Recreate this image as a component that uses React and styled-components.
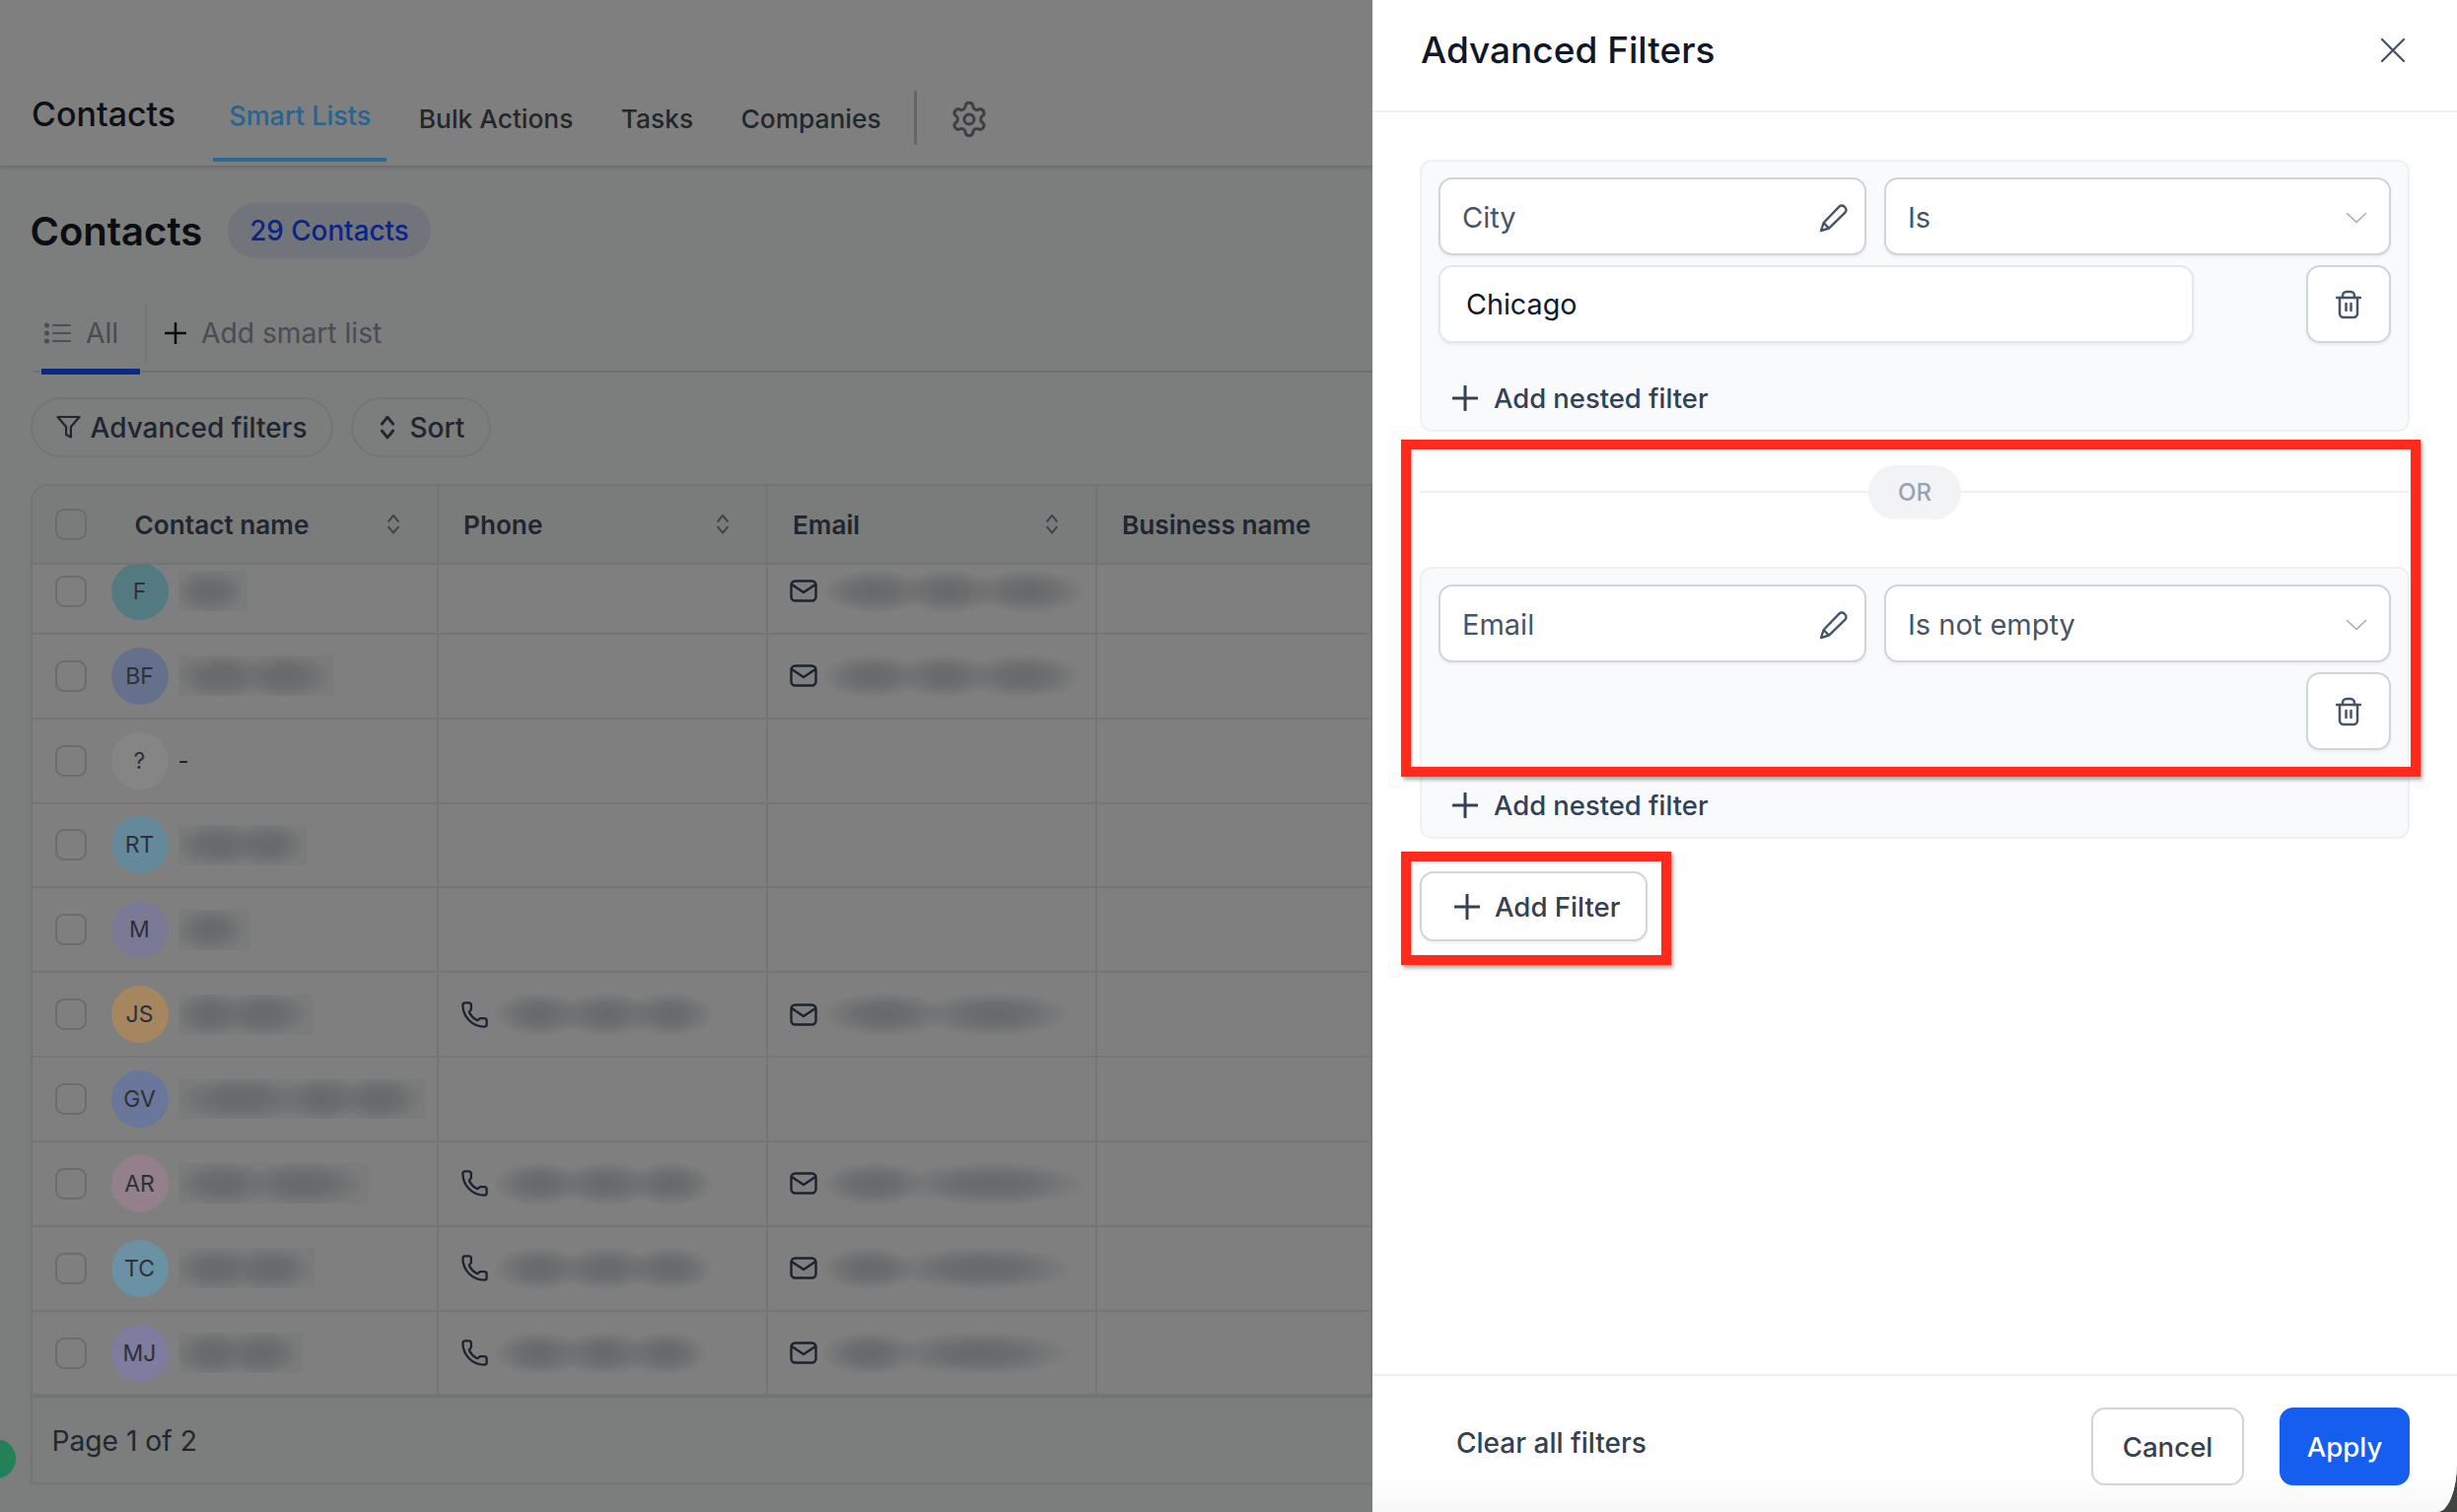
import React from "react";
import styled, { createGlobalStyle } from "styled-components";
import { Phone, Settings } from "lucide-react";

const GlobalStyle = createGlobalStyle`
  html, body { margin: 0; padding: 0; }
  body { font-family: Inter, "Liberation Sans", sans-serif; }
  * { box-sizing: border-box; }
`;

const rows = [
  { initials: "F", color: "#537a80", name: [44], email: [80, 70, 90] },
  { initials: "BF", color: "#65708c", name: [66, 66], email: [76, 70, 90] },
  { initials: "?", color: "#858585", empty: true },
  { initials: "RT", color: "#64899b", name: [60, 44] },
  { initials: "M", color: "#7b7a96", name: [46] },
  { initials: "JS", color: "#a6865f", name: [44, 66], phone: [66, 70, 60], email: [100, 125] },
  { initials: "GV", color: "#69779a", name: [108, 56, 60] },
  { initials: "AR", color: "#94808b", name: [70, 96], phone: [66, 70, 60], email: [80, 160] },
  { initials: "TC", color: "#6a92a4", name: [56, 56], phone: [66, 70, 60], email: [70, 160] },
  { initials: "MJ", color: "#7e7c9f", name: [50, 50], phone: [66, 66, 58], email: [70, 155] },
];

const Page = styled.div`
  display: flex;
  width: 2492px;
  height: 1534px;
  overflow: hidden;
  background: #3f4441;
`;

const Backdrop = styled.div`
  position: relative;
  width: 1392px;
  flex: none;
  background: #7c7d7d;
`;

const NavBar = styled.nav`
  display: flex;
  align-items: flex-end;
  height: 168px;
  padding: 0 0 4px 32px;
  background: #7f7f7f;
  box-shadow: 0 2px 4px rgba(0, 0, 0, 0.16);
`;

const NavTitle = styled.div`
  height: 90px;
  padding-top: 21px;
  margin-right: 38px;
  font-size: 34px;
  font-weight: 500;
  line-height: 42px;
  color: #0d1015;
`;

const NavTab = styled.div`
  height: 90px;
  padding: ${(p) => (p.$active ? "24px 16px 0" : "27px 0 0")};
  margin-right: ${(p) => (p.$active ? "32.5px" : "48.5px")};
  font-size: ${(p) => (p.$active ? 27 : 26.3)}px;
  font-weight: 500;
  line-height: 40px;
  color: ${(p) => (p.$active ? "#27648f" : "#22272e")};
  border-bottom: ${(p) => (p.$active ? "4px solid #2b6a94" : "0")};
`;

const NavDivider = styled.div`
  align-self: flex-start;
  width: 3px;
  height: 55px;
  margin: 92px 0 0 -15px;
  background: #666;
`;

const GearIcon = styled(Settings)`
  align-self: flex-start;
  margin: 101px 0 0 33px;
  color: #3d3f42;
`;

const Content = styled.main`
  padding-left: 30.5px;
`;

const TitleRow = styled.div`
  display: flex;
  align-items: center;
  gap: 26px;
  height: 56px;
  margin-top: 38px;
`;

const PageTitle = styled.h1`
  margin: 0;
  font-size: 40px;
  font-weight: 600;
  color: #0a0d12;
`;

const CountBadge = styled.span`
  display: flex;
  align-items: center;
  height: 56px;
  padding: 0 22px;
  border-radius: 28px;
  background: #72747c;
  font-size: 27.8px;
  font-weight: 500;
  color: #0b2585;
`;

const ListTabs = styled.div`
  display: flex;
  height: 70px;
  margin: 46px 0 0 3.5px;
  border-bottom: 2px solid #6f7171;
`;

const ListTab = styled.div`
  position: relative;
  display: flex;
  align-items: center;
  gap: 15px;
  width: 108px;
  height: 70px;
  padding: 0 0 10px 11px;
  font-size: 28.2px;
  color: #474c55;
  &::after {
    content: "";
    position: absolute;
    left: 8px;
    right: 0;
    bottom: -2px;
    height: 6px;
    background: #0e2a80;
  }
`;

const AddList = styled.div`
  display: flex;
  align-items: center;
  gap: 15px;
  height: 60px;
  margin-left: 5px;
  padding: 0 0 0 18px;
  border-left: 2px solid #737676;
  font-size: 28.2px;
  color: #474c55;
`;

const FilterRow = styled.div`
  display: flex;
  gap: 18px;
  margin-top: 25px;
`;

const PillButton = styled.div`
  display: flex;
  align-items: center;
  gap: ${(p) => (p.$sort ? 16 : 10)}px;
  height: 61px;
  padding: ${(p) => (p.$sort ? "0 25px 0 28px" : "0 24px")};
  border: 2px solid #747676;
  border-radius: 31px;
  font-size: 28px;
  font-weight: 500;
  color: #20262f;
`;

const Table = styled.section`
  margin: 27px 0 0 0;
  border-left: 2px solid #737575;
  border-top: 2px solid #737575;
  border-top-left-radius: 18px;
  height: 1015px;
  border-bottom: 2px solid #737575;
`;

const HeaderRow = styled.div`
  display: grid;
  grid-template-columns: 412.5px 334px 334px 1fr;
  height: 80px;
  background: #797c7b;
  border-bottom: 2px solid #727474;
  border-top-left-radius: 16px;
`;

const HeaderCell = styled.div`
  display: flex;
  align-items: center;
  justify-content: space-between;
  padding: ${(p) => (p.$first ? "0 38px 0 104px" : "0 38px 0 25px")};
  border-right: 2px solid #737575;
  font-size: 26.2px;
  font-weight: 600;
  color: #20262f;
`;

const Rows = styled.div`
  height: 843px;
  overflow: hidden;
  background: #7f7f7f;
`;

const RowsInner = styled.div`
  margin-top: -15px;
`;

const Row = styled.div`
  display: grid;
  grid-template-columns: 412.5px 334px 334px 1fr;
  height: 85.85px;
  border-bottom: 2px solid #747575;
`;

const Cell = styled.div`
  display: flex;
  align-items: center;
  padding-left: ${(p) => p.$pad || 22}px;
  border-right: 2px solid #747575;
  color: #1c222b;
`;

const CheckBox = styled.div`
  flex: none;
  width: 32px;
  height: 32px;
  border: 2px solid #6a6c6f;
  border-radius: 9px;
`;

const HeaderCheck = styled(CheckBox)`
  position: absolute;
  margin-left: -80.5px;
`;

const Avatar = styled.div`
  flex: none;
  display: flex;
  align-items: center;
  justify-content: center;
  width: 58px;
  height: 58px;
  margin: 0 10px 0 24.5px;
  border-radius: 50%;
  background: ${(p) => p.$color};
  font-size: 23px;
  color: #2c3138;
`;

const Dash = styled.span`
  font-size: 24px;
  color: #1c222b;
`;

const BlurBox = styled.div`
  display: flex;
  align-items: center;
  height: ${(p) => (p.$boxed ? 41 : 46)}px;
  padding: ${(p) => (p.$boxed ? "0 16px 0 10px" : "0 14px")};
  background: ${(p) => (p.$boxed ? "#7a7b7b" : "transparent")};
  overflow: ${(p) => (p.$boxed ? "hidden" : "visible")};
`;

const BlurBit = styled.span`
  display: block;
  flex: none;
  height: 46px;
  margin: 0 -14px;
  background: radial-gradient(
    ellipse closest-side,
    #66686b 0%,
    rgba(102, 104, 107, 0.75) 45%,
    rgba(102, 104, 107, 0) 100%
  );
`;

const RowIcon = styled.span`
  flex: none;
  display: flex;
  margin-right: 4px;
  color: #1b2230;
`;

const Pagination = styled.div`
  display: flex;
  align-items: center;
  height: 88px;
  padding: 2px 0 0 20px;
  border-top: 2px solid #727474;
  font-size: 28.2px;
  color: #22272e;
`;

const HelpDot = styled.div`
  position: absolute;
  left: -24px;
  top: 1460px;
  width: 40px;
  height: 40px;
  border-radius: 50%;
  background: #238057;
`;

const Panel = styled.aside`
  position: relative;
  display: flex;
  flex-direction: column;
  width: 1100px;
  flex: none;
  background: #fff;
  border-bottom-right-radius: 20px 50px;
`;

const PanelHeader = styled.header`
  display: flex;
  align-items: center;
  justify-content: space-between;
  height: 114px;
  padding: 0 52px 11px 49px;
  border-bottom: 2px solid #eef0f4;
`;

const PanelTitle = styled.h2`
  margin: 0;
  font-size: 37px;
  font-weight: 500;
  color: #101828;
`;

const PanelBody = styled.div`
  flex: 1;
  padding: 48px 48px 0;
`;

const GroupCard = styled.div`
  height: 276px;
  padding: 16px 17px 0;
  border: 2px solid #eef0f4;
  border-radius: 12px;
  background: #f9fafb;
`;

const FieldRow = styled.div`
  display: flex;
  justify-content: space-between;
  gap: 18px;
  height: 79px;
  margin-bottom: 10px;
`;

const Field = styled.div`
  display: flex;
  align-items: center;
  justify-content: space-between;
  width: ${(p) => p.$width || "auto"};
  flex: ${(p) => (p.$width ? "none" : 1)};
  height: 79px;
  padding: ${(p) => (p.$value ? "0 26px" : "2px 16px 0 22px")};
  border: 2px solid ${(p) => (p.$value ? "#e4e7ec" : "#d0d5dd")};
  border-radius: 14px;
  background: #fff;
  box-shadow: 0 2px 3px rgba(16, 24, 40, 0.06);
  font-size: ${(p) => (p.$value ? 28.7 : 29)}px;
  color: ${(p) => (p.$value ? "#101828" : "#475467")};
`;

const IconButton = styled.div`
  display: flex;
  align-items: center;
  justify-content: center;
  width: 86px;
  height: 79px;
  margin-left: auto;
  border: 2px solid #d0d5dd;
  border-radius: 14px;
  background: #fff;
  box-shadow: 0 2px 3px rgba(16, 24, 40, 0.06);
`;

const NestedLink = styled.div`
  display: flex;
  align-items: center;
  gap: 16px;
  margin: 39px 0 0 14px;
  font-size: 27.4px;
  font-weight: 500;
  color: #344054;
`;

const OrDivider = styled.div`
  position: relative;
  display: flex;
  align-items: center;
  justify-content: center;
  height: 122px;
  margin-bottom: 15px;
  &::before {
    content: "";
    position: absolute;
    left: 0;
    right: 0;
    top: 60px;
    height: 2px;
    background: #eef0f4;
  }
`;

const OrPill = styled.span`
  position: relative;
  display: flex;
  align-items: center;
  justify-content: center;
  width: 94px;
  height: 55px;
  border-radius: 28px;
  background: #f2f3f5;
  font-size: 24px;
  font-weight: 500;
  color: #98a2b3;
`;

const AddFilter = styled.div`
  display: flex;
  align-items: center;
  gap: 15px;
  width: 231px;
  height: 71px;
  margin-top: 33px;
  padding-left: 33px;
  border: 2px solid #d0d5dd;
  border-radius: 14px;
  background: #fff;
  box-shadow: 0 2px 3px rgba(16, 24, 40, 0.06);
  font-size: 27.6px;
  font-weight: 500;
  color: #344054;
`;

const Highlight = styled.div`
  position: absolute;
  left: ${(p) => p.$left}px;
  top: ${(p) => p.$top}px;
  width: ${(p) => p.$width}px;
  height: ${(p) => p.$height}px;
  border: 10px solid #ff2a1b;
  box-shadow: 2px 3px 4px rgba(0, 0, 0, 0.35), inset 1px 1px 3px rgba(0, 0, 0, 0.25);
  pointer-events: none;
`;

const PanelFooter = styled.footer`
  display: flex;
  align-items: flex-start;
  justify-content: space-between;
  height: 140px;
  padding: 32px 48px 0 85px;
  border-top: 2px solid #eef0f4;
  border-bottom-right-radius: 20px 50px;
  background: linear-gradient(#fff 70%, #f8f8f9);
`;

const ClearLink = styled.div`
  margin-top: 19px;
  font-size: 28px;
  font-weight: 500;
  color: #344054;
`;

const FooterActions = styled.div`
  display: flex;
  gap: 36px;
`;

const FooterButton = styled.div`
  display: flex;
  align-items: center;
  justify-content: center;
  width: ${(p) => (p.$primary ? 132 : 155)}px;
  height: 79px;
  border: 2px solid ${(p) => (p.$primary ? "#155eef" : "#d0d5dd")};
  border-radius: 14px;
  background: ${(p) => (p.$primary ? "#155eef" : "#fff")};
  font-size: 27.6px;
  font-weight: 500;
  color: ${(p) => (p.$primary ? "#fff" : "#344054")};
`;

const ChevronSvg = styled.svg`
  margin-right: 6px;
`;

function SortIcon({ size = 12, color = "#3c424b", width = 2 }) {
  return (
    <svg width={size} height={size * 1.8} viewBox="0 0 12 22" fill="none" stroke={color} strokeWidth={width} strokeLinecap="round" strokeLinejoin="round">
      <polyline points="1,8 6,2 11,8" />
      <polyline points="1,14 6,20 11,14" />
    </svg>
  );
}

function PlusIcon({ size = 26, color = "#344054" }) {
  return (
    <svg width={size} height={size} viewBox="0 0 26 26" fill="none" stroke={color} strokeWidth="3" strokeLinecap="round">
      <path d="M13 1v24M1 13h24" />
    </svg>
  );
}

function PencilIcon() {
  return (
    <svg width="30" height="30" viewBox="0 0 30 30" fill="none" stroke="#475467" strokeWidth="2.4" strokeLinejoin="round">
      <path d="M2 28l2.6-8L20.4 3.6a3.6 3.6 0 0 1 5.1 0l.9.9a3.6 3.6 0 0 1 0 5.1L10 25.6z" />
      <path d="M4.6 20l5.4 5.6" />
    </svg>
  );
}

function TrashIcon() {
  return (
    <svg width="26" height="30" viewBox="0 0 26 30" fill="none" stroke="#475467" strokeWidth="2.5" strokeLinecap="round" strokeLinejoin="round">
      <path d="M1 8h24" />
      <path d="M7 8V6a4 4 0 0 1 4-4h4a4 4 0 0 1 4 4v2" />
      <path d="M4 8v16a4 4 0 0 0 4 4h10a4 4 0 0 0 4-4V8" />
      <path d="M10.5 14v7M15.5 14v7" />
    </svg>
  );
}

function ChevronIcon() {
  return (
    <ChevronSvg width="22" height="12" viewBox="0 0 22 12" fill="none" stroke="#a4acb9" strokeWidth="1.6" strokeLinecap="round" strokeLinejoin="round">
      <polyline points="1.5,1.5 11,10.5 20.5,1.5" />
    </ChevronSvg>
  );
}

function CloseIcon() {
  return (
    <svg width="26" height="26" viewBox="0 0 26 26" fill="none" stroke="#475467" strokeWidth="2.3" strokeLinecap="round">
      <path d="M2 2l22 22M24 2L2 24" />
    </svg>
  );
}

function MailIcon() {
  return (
    <svg width="28" height="23" viewBox="0 0 28 23" fill="none" stroke="#1b2230" strokeWidth="2.4" strokeLinecap="round" strokeLinejoin="round">
      <rect x="1.5" y="1.5" width="25" height="20" rx="4" />
      <polyline points="2,5 14,13 26,5" />
    </svg>
  );
}

function ListIcon() {
  return (
    <svg width="27" height="22" viewBox="0 0 27 22" fill="#4a4f58" stroke="#4a4f58" strokeWidth="2" strokeLinecap="round">
      <circle cx="2.5" cy="3" r="1.6" />
      <circle cx="2.5" cy="11" r="1.6" />
      <circle cx="2.5" cy="19" r="1.6" />
      <path d="M9 3h17M9 11h17M9 19h17" />
    </svg>
  );
}

function FunnelIcon() {
  return (
    <svg width="25" height="25" viewBox="0 0 25 25" fill="none" stroke="#20262f" strokeWidth="2.2" strokeLinejoin="round">
      <path d="M1.5 2h22l-8.6 10v10.5l-4.8-2.4V12z" />
    </svg>
  );
}

function Blurred({ bits, boxed }) {
  return (
    <BlurBox $boxed={boxed}>
      {bits.map((w, i) => (
        <BlurBit key={i} style={{ width: w + 28 }} />
      ))}
    </BlurBox>
  );
}

function ContactRow({ row }) {
  return (
    <Row>
      <Cell $pad={23.5}>
        <CheckBox />
        <Avatar $color={row.color}>{row.initials}</Avatar>
        {row.empty ? <Dash>-</Dash> : <Blurred bits={row.name} boxed />}
      </Cell>
      <Cell>
        {row.phone && (
          <>
            <RowIcon>
              <Phone size={29} strokeWidth={1.9} />
            </RowIcon>
            <Blurred bits={row.phone} />
          </>
        )}
      </Cell>
      <Cell>
        {row.email && (
          <>
            <RowIcon>
              <MailIcon />
            </RowIcon>
            <Blurred bits={row.email} />
          </>
        )}
      </Cell>
      <Cell />
    </Row>
  );
}

function FilterGroup({ field, operator, value }) {
  return (
    <GroupCard>
      <FieldRow>
        <Field $width="434px">
          {field}
          <PencilIcon />
        </Field>
        <Field>
          {operator}
          <ChevronIcon />
        </Field>
      </FieldRow>
      <FieldRow>
        {value && (
          <Field $value $width="766px">
            {value}
          </Field>
        )}
        <IconButton>
          <TrashIcon />
        </IconButton>
      </FieldRow>
      <NestedLink>
        <PlusIcon />
        Add nested filter
      </NestedLink>
    </GroupCard>
  );
}

export default function App() {
  return (
    <Page>
      <GlobalStyle />
      <Backdrop>
        <NavBar>
          <NavTitle>Contacts</NavTitle>
          <NavTab $active>Smart Lists</NavTab>
          <NavTab>Bulk Actions</NavTab>
          <NavTab>Tasks</NavTab>
          <NavTab>Companies</NavTab>
          <NavDivider />
          <GearIcon size={40} strokeWidth={1.8} />
        </NavBar>
        <Content>
          <TitleRow>
            <PageTitle>Contacts</PageTitle>
            <CountBadge>29 Contacts</CountBadge>
          </TitleRow>
          <ListTabs>
            <ListTab>
              <ListIcon />
              All
            </ListTab>
            <AddList>
              <PlusIcon size={22} color="#0b0b0b" />
              Add smart list
            </AddList>
          </ListTabs>
          <FilterRow>
            <PillButton>
              <FunnelIcon />
              Advanced filters
            </PillButton>
            <PillButton $sort>
              <SortIcon size={14} color="#20262f" width={2.6} />
              Sort
            </PillButton>
          </FilterRow>
          <Table>
            <HeaderRow>
              <HeaderCell $first>
                <HeaderCheck />
                Contact name
                <SortIcon />
              </HeaderCell>
              <HeaderCell>
                Phone
                <SortIcon />
              </HeaderCell>
              <HeaderCell>
                Email
                <SortIcon />
              </HeaderCell>
              <HeaderCell>Business name</HeaderCell>
            </HeaderRow>
            <Rows>
              <RowsInner>
                {rows.map((row) => (
                  <ContactRow key={row.initials} row={row} />
                ))}
              </RowsInner>
            </Rows>
            <Pagination>Page 1 of 2</Pagination>
          </Table>
        </Content>
        <HelpDot />
      </Backdrop>
      <Panel>
        <PanelHeader>
          <PanelTitle>Advanced Filters</PanelTitle>
          <CloseIcon />
        </PanelHeader>
        <PanelBody>
          <FilterGroup field="City" operator="Is" value="Chicago" />
          <OrDivider>
            <OrPill>OR</OrPill>
          </OrDivider>
          <FilterGroup field="Email" operator="Is not empty" />
          <AddFilter>
            <PlusIcon />
            Add Filter
          </AddFilter>
        </PanelBody>
        <PanelFooter>
          <ClearLink>Clear all filters</ClearLink>
          <FooterActions>
            <FooterButton>Cancel</FooterButton>
            <FooterButton $primary>Apply</FooterButton>
          </FooterActions>
        </PanelFooter>
        <Highlight $left={29} $top={446} $width={1034} $height={342} />
        <Highlight $left={29} $top={864} $width={274} $height={115} />
      </Panel>
    </Page>
  );
}
